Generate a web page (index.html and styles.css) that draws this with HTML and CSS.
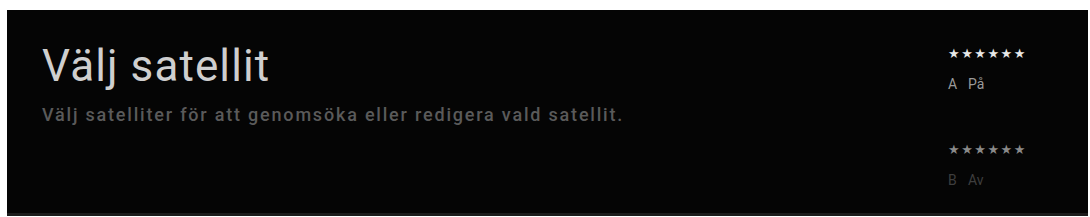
FILE: index.html
```html
<!DOCTYPE html>
<html lang="sv">
<head>
  <meta charset="UTF-8">
  <title>Välj satellit</title>
  <link rel="stylesheet" href="styles.css">
</head>
<body>

  <div class="panel">
    <div class="intro">
      <h1>Välj satellit</h1>
      <p>Välj satelliter för att genomsöka eller redigera vald satellit.</p>
    </div>

    <div class="slots">
      <div class="slot">
        <div class="stars">★★★★★★</div>
        <div class="label"><span class="key">A</span>På</div>
      </div>
      <div class="slot off">
        <div class="stars">★★★★★★</div>
        <div class="label"><span class="key">B</span>Av</div>
      </div>
    </div>
  </div>

</body>
</html>
```

FILE: styles.css
```css
body {
  margin: 0;
  background-color: #fff;
  font-family: Roboto, 'Liberation Sans', sans-serif;
}

.panel {
  margin: 10px 2px 0 7px;
  height: 203px;
  background-color: #050505;
  border-bottom: 3px solid #1c1c1c;
  display: flex;
  justify-content: space-between;
}

.intro {
  padding: 30px 0 0 35px;
}

.intro h1 {
  margin: 0;
  font-size: 44px;
  line-height: 52px;
  font-weight: 400;
  color: #cfcfcf;
  letter-spacing: 1.1px;
}

.intro p {
  margin: 12px 0 0;
  font-size: 18px;
  font-weight: 500;
  color: #5a5a5a;
  letter-spacing: 1.8px;
}

.slots {
  width: 140px;
  padding-top: 36px;
  display: flex;
  flex-direction: column;
  gap: 50px;
}

.stars {
  font-family: 'DejaVu Sans', sans-serif;
  font-size: 13px;
  line-height: 16px;
  letter-spacing: 1.5px;
  color: #e8e8e8;
}

.label {
  margin-top: 14px;
  font-size: 14px;
  line-height: 16px;
  color: #9a9a9a;
}

.label .key {
  display: inline-block;
  width: 20px;
}

.slot.off .stars {
  color: #8a8a8a;
}

.slot.off .label {
  color: #3e3e3e;
}
```
